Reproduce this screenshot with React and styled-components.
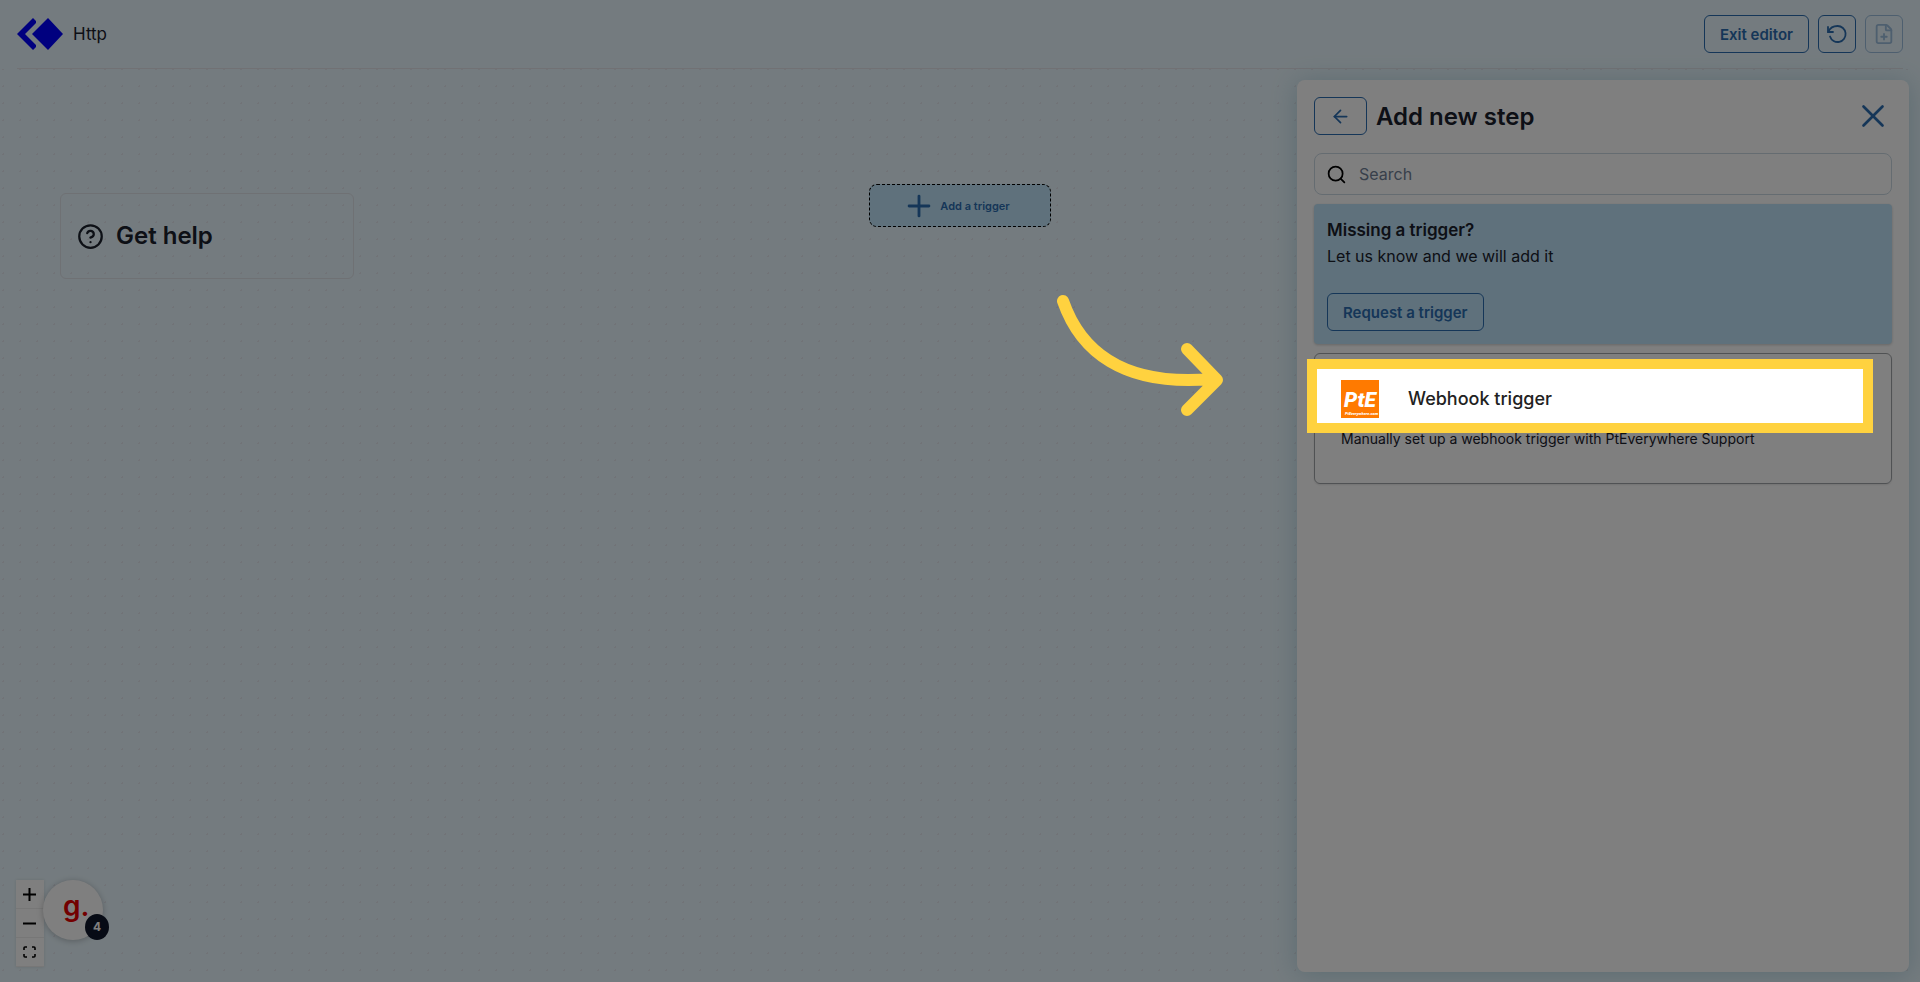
import React from "react";
import styled, { createGlobalStyle } from "styled-components";
import { ArrowLeft, CircleHelp, FilePlus, Plus, Search, X } from "lucide-react";

const GlobalStyle = createGlobalStyle`
	* {
		box-sizing: border-box;
	}

	body {
		margin: 0;
		background: #e9f7fe;
		color: #1a202c;
		font-family: Inter, "Noto Sans", sans-serif;
		font-size: 17px;
		line-height: 26px;
	}

	h2, h3, p {
		margin: 0;
	}
`;

const Page = styled.div`
	position: relative;
	display: flex;
	flex-direction: column;
	min-height: 100vh;
	overflow: hidden;
`;

const TopBar = styled.header`
	display: flex;
	align-items: center;
	justify-content: space-between;
	margin: 0 17px;
	padding: 15px 0;
	border-bottom: 1px solid #e2e2e8;
`;

const Brand = styled.a`
	display: flex;
	align-items: center;
	gap: 10px;
	color: inherit;
	text-decoration: none;
`;

const Actions = styled.div`
	display: flex;
	gap: 9px;
`;

const OutlineButton = styled.button`
	display: flex;
	align-items: center;
	justify-content: center;
	height: 38px;
	width: ${(props) => props.$width || "auto"};
	padding: 0 15px;
	border: 1px solid #2b6cb0;
	border-radius: 6px;
	background: transparent;
	color: #2b6cb0;
	font: 600 15px Inter, sans-serif;
	cursor: pointer;

	&:disabled {
		opacity: 0.4;
	}
`;

const IconButton = styled(OutlineButton)`
	width: 38px;
	padding: 0;
`;

const CloseButton = styled(IconButton)`
	margin-left: auto;
	border: 0;
`;

const Canvas = styled.main`
	position: relative;
	display: flex;
	flex: 1;
	flex-direction: column;
	align-items: flex-start;
	justify-content: space-between;
	padding: 124px 16px 15px;
	background-image: radial-gradient(circle, #e2e6ee 1px, transparent 1px);
	background-size: 17px 17px;
	background-position: 12px 9px;
`;

const HelpCard = styled.a`
	display: flex;
	align-items: center;
	gap: 12px;
	width: 294px;
	height: 86px;
	margin-left: 44px;
	padding: 0 16px;
	border: 1px solid #dee2e8;
	border-radius: 6px;
	color: inherit;
	font-size: 24px;
	font-weight: 600;
	text-decoration: none;
`;

const TriggerNode = styled.button`
	position: absolute;
	top: 115px;
	left: 50%;
	display: flex;
	align-items: center;
	justify-content: center;
	width: 182px;
	height: 43px;
	margin-left: -91px;
	padding: 0 8px 0 0;
	border: 1px dashed #000;
	border-radius: 8px;
	background: #bee3f8;
	color: #2b6cb0;
	font: 600 11px Inter, sans-serif;
	gap: 4px;
`;

const Corner = styled.div`
	display: flex;
	align-items: flex-start;
`;

const ZoomControls = styled.div`
	display: flex;
	flex-direction: column;
	width: 28px;
	box-shadow: 0 0 3px rgba(0, 0, 0, 0.12);
`;

const ZoomButton = styled.button`
	display: flex;
	align-items: center;
	justify-content: center;
	height: 29px;
	padding: 0 1px 0 0;
	border: 0;
	border-bottom: 1px solid #eee;
	background: #fefefe;
	color: #000;
`;

const ChatBubble = styled.button`
	position: relative;
	width: 60px;
	height: 60px;
	margin-left: -1px;
	padding: 0;
	border: 0;
	border-radius: 50%;
	background: #fff;
	box-shadow: 0 1px 6px rgba(0, 0, 0, 0.25);
`;

const ChatCount = styled.span`
	position: absolute;
	right: -6px;
	bottom: 0;
	width: 24px;
	height: 26px;
	border-radius: 50%;
	background: #0f172a;
	color: #fff;
	font: 700 12px/26px Inter, sans-serif;
	text-align: center;
`;

const Panel = styled.aside`
	position: absolute;
	top: 80px;
	right: 11px;
	bottom: 10px;
	display: flex;
	flex-direction: column;
	gap: 9px;
	width: 32%;
	max-width: 612px;
	padding: 17px;
	border-radius: 8px;
	background: #fff;
	box-shadow: 0 2px 26px rgba(66, 140, 160, 0.3);
`;

const PanelHeader = styled.div`
	display: flex;
	align-items: center;
	gap: 9px;
	margin-bottom: 9px;
`;

const PanelTitle = styled.h2`
	padding-top: 2px;
	font-size: 24px;
	font-weight: 600;
	line-height: 32px;
`;

const SearchBox = styled.label`
	display: flex;
	align-items: center;
	gap: 12px;
	height: 42px;
	padding: 0 11px;
	border: 1px solid #cbd9e3;
	border-radius: 8px;
	color: #000;
`;

const SearchInput = styled.input`
	flex: 1;
	padding: 0;
	border: 0;
	outline: 0;
	background: transparent;
	font: 400 16px Inter, sans-serif;

	&::placeholder {
		color: #718096;
	}
`;

const Notice = styled.section`
	display: flex;
	flex-direction: column;
	align-items: flex-start;
	padding: 13px;
	border-radius: 4px;
	background: #bee3f8;
	box-shadow: 0 1px 3px rgba(0, 0, 0, 0.2);
`;

const NoticeTitle = styled.h3`
	font-size: 17px;
	font-weight: 600;
`;

const NoticeText = styled.p`
	margin-bottom: 24px;
	font-size: 16px;
`;

const StepCard = styled.section`
	height: 131px;
	padding: 16px 26px;
	border: 1px solid #a0a4a8;
	border-radius: 6px;
	box-shadow: 0 1px 2px rgba(0, 0, 0, 0.1);
`;

const StepRow = styled.div`
	position: relative;
	display: flex;
	align-items: center;
	gap: 29px;
	height: 56px;
	padding-top: 2px;
	color: #222;
	font-size: 18px;
	font-weight: 500;
`;

// frames the active step and dims everything around it
const Spotlight = styled.div`
	position: absolute;
	inset: -11px -8px -7px -34px;
	border: 10px solid #ffd23f;
	box-shadow: 0 0 0 3000px rgba(0, 0, 0, 0.5);
	pointer-events: none;
`;

const StepText = styled.p`
	font-size: 14px;
`;

const Arrow = styled.svg`
	position: absolute;
	top: 290px;
	left: 55%;
	z-index: 2;
	pointer-events: none;
`;

const Logo = () => (
	<svg width="46" height="32" viewBox="0 0 46 32" fill="#0000ff">
		<path d="M16 0 0 16 16 32 19 29 19 27 8 16 19 5 19 3Z" />
		<path d="M31 0 46 16 31 32 15 16Z" />
	</svg>
);

const StepLogo = () => (
	<svg width="38" height="38" viewBox="0 0 38 38">
		<rect width="38" height="38" fill="#ff7a00" />
		<g fill="#fff" fontWeight="900" fontStyle="italic" fontFamily="Roboto, sans-serif">
			<text x="3" y="27" fontSize="21">PtE</text>
			<text x="4" y="35" fontSize="4">PtEverywhere.com</text>
		</g>
	</svg>
);

const FitIcon = () => (
	<svg width="13" height="12" viewBox="0 0 13 12" fill="none" stroke="currentColor" strokeWidth="1.6">
		<path d="M1 4V2Q1 1 2 1H4M9 1H11Q12 1 12 2V4M12 8V10Q12 11 11 11H9M4 11H2Q1 11 1 10V8" />
	</svg>
);

const UndoIcon = () => (
	<svg width="22" height="20" viewBox="0 0 22 20" fill="none" stroke="currentColor" strokeWidth="1.8" strokeLinecap="round">
		<path d="M2 3V8H7" />
		<path d="M2.5 7.5C4 4 7 2 11.500 2A8 8 0 1 1 4 12.500" />
	</svg>
);

const App = () => (
	<>
		<GlobalStyle />
		<Page>
			<TopBar>
				<Brand href="#">
					<Logo />
					<span>Http</span>
				</Brand>
				<Actions>
					<OutlineButton>Exit editor</OutlineButton>
					<IconButton aria-label="Undo">
						<UndoIcon />
					</IconButton>
					<IconButton aria-label="Add note" disabled>
						<FilePlus size={22} />
					</IconButton>
				</Actions>
			</TopBar>
			<Canvas>
				<HelpCard href="#">
					<CircleHelp size={27} strokeWidth={2} />
					Get help
				</HelpCard>
				<TriggerNode>
					<Plus size={34} strokeWidth={2} />
					Add a trigger
				</TriggerNode>
				<Corner>
					<ZoomControls>
						<ZoomButton aria-label="Zoom in">
							<svg width="13" height="13" stroke="currentColor" strokeWidth="2">
								<path d="M0 6.5H13M6.5 0V13" />
							</svg>
						</ZoomButton>
						<ZoomButton aria-label="Zoom out">
							<svg width="13" height="3" stroke="currentColor" strokeWidth="2">
								<path d="M0 1.5H13" />
							</svg>
						</ZoomButton>
						<ZoomButton aria-label="Fit view">
							<FitIcon />
						</ZoomButton>
					</ZoomControls>
					<ChatBubble aria-label="Open chat">
						<svg width="60" height="60" viewBox="0 0 60 60">
							<text x="20" y="36" fill="#e60000" fontFamily="Inter" fontSize="28" fontWeight="600">g.</text>
						</svg>
						<ChatCount>4</ChatCount>
					</ChatBubble>
				</Corner>
			</Canvas>
			<Arrow width="176" height="130" viewBox="0 0 176 130" fill="none" stroke="#ffd23f" strokeWidth="12" strokeLinecap="round" strokeLinejoin="round">
				<path d="M7 11C24 60 66 97 156 89M131 59 161 90 131 120" />
			</Arrow>
			<Panel>
				<PanelHeader>
					<OutlineButton $width="53px" aria-label="Back">
						<ArrowLeft size={21} strokeWidth={2} />
					</OutlineButton>
					<PanelTitle>Add new step</PanelTitle>
					<CloseButton aria-label="Close">
						<X size={38} strokeWidth={1.7} />
					</CloseButton>
				</PanelHeader>
				<SearchBox>
					<Search size={21} strokeWidth={2} />
					<SearchInput aria-label="Search" placeholder="Search" />
				</SearchBox>
				<Notice>
					<NoticeTitle>Missing a trigger?</NoticeTitle>
					<NoticeText>Let us know and we will add it</NoticeText>
					<OutlineButton>Request a trigger</OutlineButton>
				</Notice>
				<StepCard>
					<StepRow>
						<StepLogo />
						<span>Webhook trigger</span>
						<Spotlight />
					</StepRow>
					<StepText>Manually set up a webhook trigger with PtEverywhere Support</StepText>
				</StepCard>
			</Panel>
		</Page>
	</>
);

export default App;
